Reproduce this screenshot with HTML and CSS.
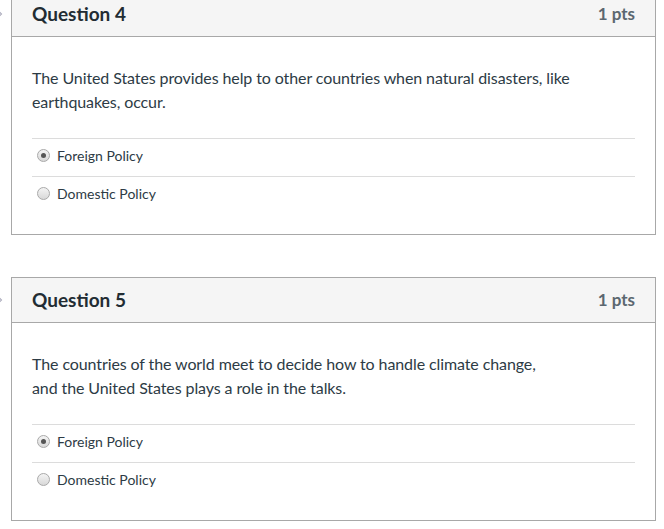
FILE: index.html
```html
<!DOCTYPE html>
<html>
<head>
<meta charset="utf-8">
<link rel="stylesheet" href="styles.css">
</head>
<body>
<div class="page">
  <div class="question">
    <svg class="marker" width="6" height="8" viewBox="0 0 6 8"><path d="M0 1.5 L2.5 4 L0 6.5" fill="none" stroke="#aab" stroke-width="1.1"/></svg>
    <div class="q-header">
      <span class="q-title">Question 4</span>
      <span class="q-pts">1 pts</span>
    </div>
    <div class="q-body">
      <p class="q-text">The United States provides help to other countries when natural disasters, like earthquakes, occur.</p>
      <div class="answer"><span class="radio checked"></span><span>Foreign Policy</span></div>
      <div class="answer"><span class="radio"></span><span>Domestic Policy</span></div>
    </div>
  </div>
  <div class="question">
    <svg class="marker" width="6" height="8" viewBox="0 0 6 8"><path d="M0 1.5 L2.5 4 L0 6.5" fill="none" stroke="#aab" stroke-width="1.1"/></svg>
    <div class="q-header">
      <span class="q-title">Question 5</span>
      <span class="q-pts">1 pts</span>
    </div>
    <div class="q-body">
      <p class="q-text">The countries of the world meet to decide how to handle climate change,<br>and the United States plays a role in the talks.</p>
      <div class="answer"><span class="radio checked"></span><span>Foreign Policy</span></div>
      <div class="answer"><span class="radio"></span><span>Domestic Policy</span></div>
    </div>
  </div>
</div>
</body>
</html>
```

FILE: styles.css
```css
html, body {
  margin: 0;
  padding: 0;
  background: #fff;
}
body {
  font-family: Lato, "Open Sans", sans-serif;
  color: #2d3b45;
}
.page {
  margin-top: -9px;
  padding: 0 8px 0 11px;
  display: flex;
  flex-direction: column;
  gap: 42px;
}
.question {
  position: relative;
  border: 1px solid #a8a8a8;
  background: #fff;
}
.marker {
  position: absolute;
  left: -13px;
  top: 18px;
}
.q-header {
  height: 44px;
  box-sizing: border-box;
  background: #f5f5f5;
  border-bottom: 1px solid #a8a8a8;
  box-sizing: content-box;
  display: flex;
  align-items: center;
  justify-content: space-between;
  padding: 0 20px;
}
.q-header > span {
  margin-bottom: 2px;
}
.q-title {
  font-size: 19px;
  font-weight: bold;
  color: #222c33;
}
.q-pts {
  font-size: 17px;
  font-weight: bold;
  color: #5b6770;
}
.q-body {
  padding: 29px 20px 20px;
}
.q-text {
  margin: 0 0 24px;
  font-size: 16px;
  line-height: 24px;
  letter-spacing: -0.1px;
}
.answer {
  box-sizing: border-box;
  height: 38px;
  padding-bottom: 4px;
  border-top: 1px solid #dcdcdc;
  display: flex;
  align-items: center;
  font-size: 14px;
}
.radio {
  width: 11px;
  height: 11px;
  border-radius: 50%;
  border: 1px solid #a9a9a9;
  background: linear-gradient(#f4f4f4, #d8d8d8);
  margin: 0 7px 0 5px;
  display: flex;
  align-items: center;
  justify-content: center;
  box-sizing: content-box;
}
.radio.checked::after {
  content: "";
  width: 5px;
  height: 5px;
  border-radius: 50%;
  background: #555;
}
```
